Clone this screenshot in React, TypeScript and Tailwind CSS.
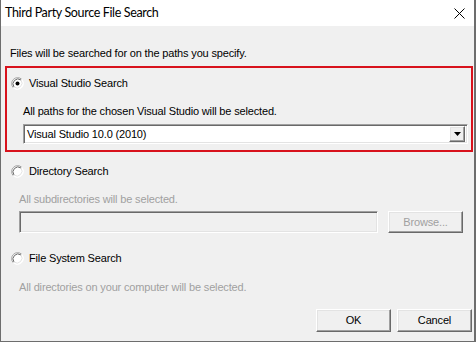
import React from "react";

const body = { fontFamily: '"Liberation Sans", Arial, sans-serif' } as const;

function Radio({ checked }: { checked?: boolean }) {
  return (
    <svg width="13" height="13" viewBox="0 0 13 13" className="shrink-0">
      <circle cx="6.5" cy="6.5" r="6" fill="#ffffff" />
      <path d="M2.26 10.74 A6 6 0 0 1 10.74 2.26" fill="none" stroke="#a0a0a0" strokeWidth="1" />
      <path d="M3 10 A5 5 0 0 1 10 3" fill="none" stroke="#696969" strokeWidth="1" />
      <path d="M10.74 2.26 A6 6 0 0 1 2.26 10.74" fill="none" stroke="#ffffff" strokeWidth="1" />
      <path d="M10 3 A5 5 0 0 1 3 10" fill="none" stroke="#e3e3e3" strokeWidth="1" />
      {checked && <circle cx="6.5" cy="6.5" r="2" fill="#000000" />}
    </svg>
  );
}

const sunken =
  "border border-t-[#a0a0a0] border-l-[#a0a0a0] border-b-white border-r-white shadow-[inset_1px_1px_0_#696969,inset_-1px_-1px_0_#e3e3e3]";
const raised =
  "border border-t-white border-l-white border-b-[#696969] border-r-[#696969] shadow-[inset_-1px_-1px_0_#a0a0a0,inset_1px_1px_0_#e3e3e3]";

export default function App() {
  return (
    <div className="w-[476px] h-[342px] flex flex-col bg-[#f0f0f0] border-l border-r-2 border-b border-[#6d6d6d] text-[11px] text-black overflow-hidden" style={body}>
      <div className="h-[26px] bg-white flex items-center justify-between pl-[4px] pr-[9px] shrink-0">
        <span className="text-[12.5px] tracking-[-0.35px] text-black" style={{ fontFamily: 'Lato, "Noto Sans", sans-serif' }}>
          Third Party Source File Search
        </span>
        <svg width="11" height="11" viewBox="0 0 11 11">
          <path d="M0.5 0.5 L10.5 10.5 M10.5 0.5 L0.5 10.5" stroke="#000" strokeWidth="1" />
        </svg>
      </div>

      <div className="flex flex-col tracking-[-0.16px]">
        <div className="h-[14px] mt-[20px] pl-[9px] flex items-center">
          Files will be searched for on the paths you specify.
        </div>

        <div className="mt-[6px] ml-[4px] w-[468px] border-2 border-[#d8121c] flex flex-col pl-[4px] pr-[3px] pt-[7px] pb-[6px]">
          <div className="h-[16px] flex items-center gap-[4px]">
            <Radio checked />
            <span className="ml-[1px]">Visual Studio Search</span>
          </div>
          <div className="h-[16px] mt-[12px] pl-[12px] flex items-center">
            All paths for the chosen Visual Studio will be selected.
          </div>
          <div className="mt-[5px] ml-[12px] h-[20px] bg-white flex items-center justify-between pl-[3px] pr-[2px] border border-t-[#a0a0a0] border-l-[#a0a0a0] border-b-white border-r-white shadow-[inset_1px_1px_0_#696969,inset_-1px_-1px_0_#e3e3e3]">
            <span>Visual Studio 10.0 (2010)</span>
            <div className={`w-[16px] h-[16px] bg-[#f0f0f0] flex items-center justify-center ${raised}`}>
              <svg width="7" height="4" viewBox="0 0 7 4">
                <path d="M0 0 H7 L3.5 4 Z" fill="#000" />
              </svg>
            </div>
          </div>
        </div>

        <div className="h-[16px] mt-[11px] pl-[10px] flex items-center gap-[4px]">
          <Radio />
          <span className="ml-[1px]">Directory Search</span>
        </div>
        <div className="h-[16px] mt-[12px] pl-[18px] flex items-center text-[#a0a0a0]">
          All subdirectories will be selected.
        </div>
        <div className="mt-[4px] pl-[18px] flex items-center gap-[10px]">
          <div className={`w-[359px] h-[22px] bg-[#f0f0f0] ${sunken}`} />
          <div className={`w-[75px] h-[22px] flex items-center justify-center text-[#a0a0a0] ${raised}`}>
            Browse...
          </div>
        </div>

        <div className="h-[16px] mt-[17px] pl-[10px] flex items-center gap-[4px]">
          <Radio />
          <span className="ml-[1px]">File System Search</span>
        </div>
        <div className="h-[16px] mt-[13px] pl-[18px] flex items-center text-[#a0a0a0]">
          All directories on your computer will be selected.
        </div>

        <div className="mt-[14px] flex justify-end gap-[6px] pr-[2px]">
          <div className={`w-[75px] h-[23px] flex items-center justify-center ${raised}`}>OK</div>
          <div className={`w-[75px] h-[23px] flex items-center justify-center ${raised}`}>Cancel</div>
        </div>
      </div>
    </div>
  );
}
